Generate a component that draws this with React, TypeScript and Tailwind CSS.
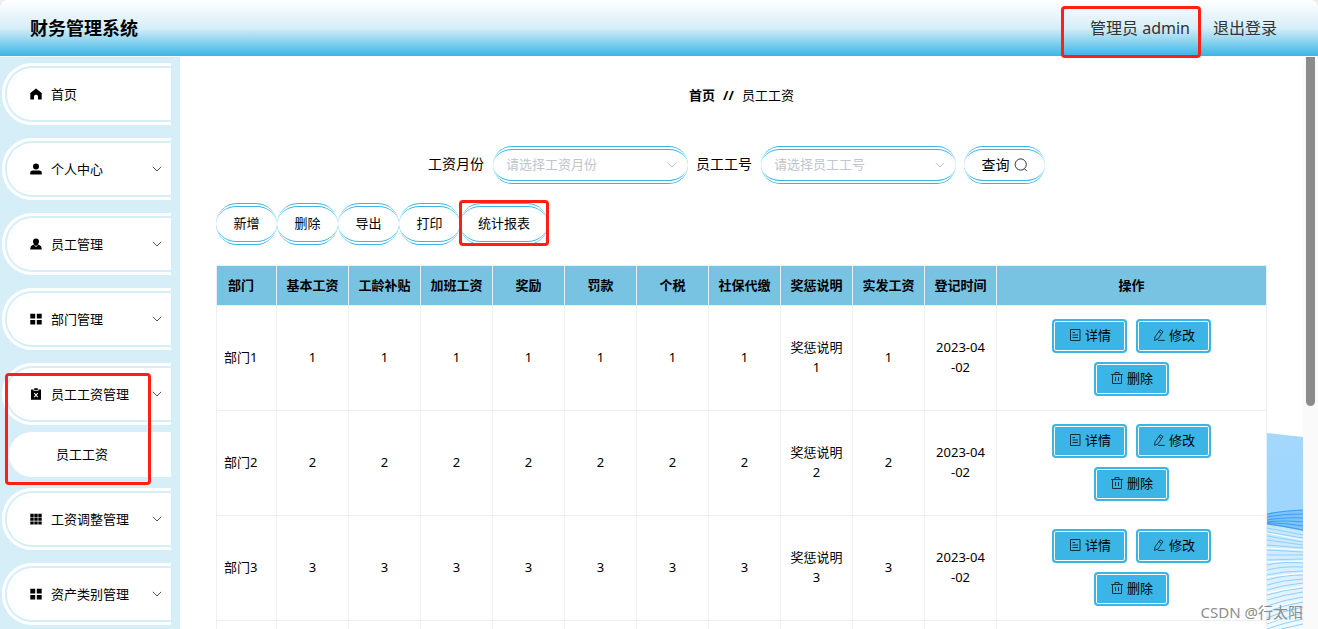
import type { ReactNode } from 'react';

type MenuItem = {
  label: string;
  icon: ReactNode;
  children?: string[];
  leaf?: boolean;
};

function Icon({ children }: { children: ReactNode }) {
  return (
    <svg viewBox="0 0 12 12" className="size-3 shrink-0" fill="currentColor" aria-hidden="true">
      {children}
    </svg>
  );
}

const homeIcon = (
  <Icon>
    <path d="M6 .5 11.700 5v6.600H8V8.400C8 6.200 4 6.200 4 8.400v3.200H.3V5z" />
  </Icon>
);

const userIcon = (
  <Icon>
    <circle cx="6" cy="3.4" r="3" />
    <path d="M.2 11.600V10c0-1.600 1-2.500 2.600-2.500h6.400c1.600 0 2.600.9 2.600 2.500v1.600z" />
  </Icon>
);

const staffIcon = (
  <Icon>
    <path d="M6 .4a3 3 0 0 1 3 3c0 1.300-.6 2.300-1.300 2.900l2.400 1.100c.9.4 1.500 1.700 1.700 4.200H.2c.2-2.500.8-3.800 1.700-4.200l2.400-1.100C3.600 5.700 3 4.700 3 3.400a3 3 0 0 1 3-3z" />
    <path d="M4.600 7.200 6 8.800l1.400-1.600" stroke="#fff" strokeWidth=".8" fill="none" />
  </Icon>
);

const menuIcon = (
  <Icon>
    <path d="M.3.800H5.200v4.600H.3zM6.800.800h4.900v4.600H6.800zM.3 6.900h4.900v4.600H.3zM6.800 6.900h4.900v4.600H6.800z" />
  </Icon>
);

const releaseIcon = (
  <Icon>
    <path d="M1 1.500h2.500v1.200h5V1.500H11v10.300H1zM4.200.3h3.600v1.700H4.200z" />
    <path d="m4.200 5 3.600 4.200M7.800 5 4.200 9.200" stroke="#fff" strokeWidth="1.100" />
  </Icon>
);

const gridIcon = (
  <Icon>
    <path d="M.3.800h3.400v3.200H.3zM4.300.800h3.400v3.200H4.300zM8.300.800h3.400v3.200H8.300zM.3 4.600h3.400v3.200H.3zM4.300 4.600h3.400v3.200H4.300zM8.300 4.600h3.400v3.200H8.300zM.3 8.400h3.400v3.200H.3zM4.300 8.400h3.400v3.200H4.300zM8.300 8.400h3.400v3.200H8.300z" />
  </Icon>
);

const menu: MenuItem[] = [
  { label: '首页', icon: homeIcon, leaf: true },
  { label: '个人中心', icon: userIcon },
  { label: '员工管理', icon: staffIcon },
  { label: '部门管理', icon: menuIcon },
  { label: '员工工资管理', icon: releaseIcon, children: ['员工工资'] },
  { label: '工资调整管理', icon: gridIcon },
  { label: '资产类别管理', icon: menuIcon },
];

const columns = [
  '基本工资',
  '工龄补贴',
  '加班工资',
  '奖励',
  '罚款',
  '个税',
  '社保代缴',
  '奖惩说明',
  '实发工资',
  '登记时间',
];

const rows = [1, 2, 3].map((n) => ({
  dept: `部门${n}`,
  values: [n, n, n, n, n, n, n, `奖惩说明${n}`, n, '2023-04\n-02'],
}));

function Chevron({ className }: { className: string }) {
  return (
    <svg viewBox="0 0 10 6" className={className} fill="none" stroke="currentColor" aria-hidden="true">
      <path d="m.8.8 4.200 4.200L9.200.8" />
    </svg>
  );
}

function Highlight({ className }: { className: string }) {
  return (
    <span className={`pointer-events-none absolute z-10 rounded-sm border-3 border-[#fe2015] ${className}`} />
  );
}

function SideMenu() {
  return (
    <nav className="w-[180px] shrink-0 overflow-hidden bg-[#d6eef8] pt-[6px] pr-[9px] pl-[2px]">
      <ul className="flex flex-col gap-[13px]">
        {menu.map((item) => (
          <li key={item.label} className={item.children ? 'relative -mb-[2px]' : ''}>
            <button className="flex h-[62px] w-full items-center gap-[9px] rounded-l-[30px] border-8 border-r-0 border-double border-white bg-white bg-clip-padding pr-[9px] pb-px pl-5">
              {item.icon}
              <span className="flex-1 text-left">{item.label}</span>
              {!item.leaf && <Chevron className="w-[10px] text-[#555]" />}
            </button>
            {item.children?.map((child) => (
              <a
                key={child}
                href="#"
                className="mt-[7px] ml-[7px] flex h-[45px] items-center rounded-l-full bg-white pb-[2px] pl-[47px]"
              >
                {child}
              </a>
            ))}
            {item.children && <Highlight className="top-[10px] right-5 -bottom-2 left-[3px]" />}
          </li>
        ))}
      </ul>
    </nav>
  );
}

function FilterSelect({ id, label, placeholder }: { id: string; label: string; placeholder: string }) {
  return (
    <div className="mr-2 flex items-center gap-[9px]">
      <label htmlFor={id} className="pb-[2px] text-sm">
        {label}
      </label>
      <div className="relative">
        <select
          id={id}
          className="h-[38px] w-[195px] appearance-none rounded-[30px] border-y-4 border-double border-[#3ab5e6] bg-white pb-[3px] pl-[13px] text-[#c0c4cc]"
        >
          <option>{placeholder}</option>
        </select>
        <Chevron className="pointer-events-none absolute top-4 right-[11px] w-[10px] text-[#c0c4cc]" />
      </div>
    </div>
  );
}

function ToolButton({ label, marked }: { label: string; marked?: boolean }) {
  return (
    <button
      className={`relative h-[42px] rounded-[30px] border-y-4 border-double border-[#3ab5e6] bg-white pb-[3px] ${marked ? 'w-[88px]' : 'w-[61px]'}`}
    >
      {label}
      {marked && <Highlight className="-inset-x-px -top-[7px] -bottom-[5px]" />}
    </button>
  );
}

function ActionButton({ label, children }: { label: string; children: ReactNode }) {
  return (
    <button className="flex h-[34px] w-[75px] items-center justify-center gap-1 rounded border-2 border-[#3ab5e6] bg-[#3ab5e6] pb-[2px] pl-px shadow-[inset_0_0_0_1px_#fff]">
      <svg viewBox="0 0 12 12" className="size-3" fill="none" stroke="#123441" aria-hidden="true">
        {children}
      </svg>
      {label}
    </button>
  );
}

function SalaryTable() {
  return (
    <table className="mt-5 w-full table-fixed border-separate border-spacing-0 border-t border-l border-[#ebeef5] bg-white">
      <colgroup>
        <col className="w-[60px]" />
        {columns.map((c) => (
          <col key={c} className="w-[72px]" />
        ))}
        <col />
      </colgroup>
      <thead>
        <tr className="h-10 bg-[#78c3e2]">
          <th className="border-r border-b border-[#ebeef5] pb-[2px] pl-[11px] text-left">部门</th>
          {columns.map((c) => (
            <th key={c} className="border-r border-b border-[#ebeef5] pb-[2px]">
              {c}
            </th>
          ))}
          <th className="border-r border-b border-[#ebeef5] pb-[2px]">操作</th>
        </tr>
      </thead>
      <tbody>
        {rows.map((row) => (
          <tr key={row.dept} className="h-[105px]">
            <td className="border-r border-b border-[#ebeef5] pb-[2px] pl-[7px]">{row.dept}</td>
            {row.values.map((value, i) => (
              <td
                key={columns[i]}
                className="border-r border-b border-[#ebeef5] px-2 pb-[2px] text-center break-all whitespace-pre-line"
              >
                {value}
              </td>
            ))}
            <td className="border-r border-b border-[#ebeef5] px-5 pb-[2px]">
              <div className="flex flex-wrap justify-center gap-[9px]">
                <ActionButton label="详情">
                  <path d="M1.500.500h9.500v11h-9.500zM3.500 3.500h2.500M3.500 6h5.500M3.500 8.500h5.500" />
                </ActionButton>
                <ActionButton label="修改">
                  <path d="M7.200.800 10 2.600 5 9.900 1.600 11.400l.4-3.500zM6 2.700l2.700 1.800M5 11.400h6.800" />
                </ActionButton>
                <ActionButton label="删除">
                  <path d="M.2 2.500h11.600M1.500 2.500v9h9v-9M4 2.500V.500h4v2M4.500 5v4M7.500 5v4" />
                </ActionButton>
              </div>
            </td>
          </tr>
        ))}
        <tr className="h-[105px]" aria-hidden="true">
          {Array.from({ length: columns.length + 2 }, (_, i) => (
            <td key={i} className="border-r border-b border-[#ebeef5]" />
          ))}
        </tr>
      </tbody>
    </table>
  );
}

// decorative waves behind the content, only the right edge is visible
function Waves() {
  return (
    <svg
      viewBox="0 0 36 196"
      preserveAspectRatio="none"
      className="absolute right-0 bottom-0 h-[196px] w-9"
      fill="none"
      aria-hidden="true"
    >
      <defs>
        <linearGradient id="sky" x1="0" y1="0" x2="0" y2="1">
          <stop offset="0" stopColor="#a4d8fb" />
          <stop offset="1" stopColor="#9bd5ff" />
        </linearGradient>
        <linearGradient id="sea" x1="0" y1="0" x2="0" y2="1">
          <stop offset="0" stopColor="#c3e6fd" />
          <stop offset="1" stopColor="#f2faff" />
        </linearGradient>
      </defs>
      <path d="M0 0 36 4V98L0 91z" fill="url(#sky)" />
      <path d="M0 90 36 98v98H0z" fill="url(#sea)" />
      <path d="M0 81Q16 77 36 77V98Q18 94 0 91z" fill="#7cc3fb" />
      <g stroke="#3e9df7" strokeWidth="1.200">
        <path d="M0 81Q16 78 36 77M0 84Q16 81 36 81M0 87Q16 84 36 85M0 89Q16 87 36 89M0 90Q18 90 36 93M0 91Q18 93 36 97" />
      </g>
      <g stroke="#8fd0fb" strokeWidth="1">
        <path d="M0 95 36 102M0 99 36 105M0 103 36 109M0 107 36 112M0 112 36 115M0 117 36 119M0 122 36 122M0 127 36 126M0 132Q16 128 36 130M0 137Q16 133 36 134M0 142Q16 138 36 138M0 147Q16 142 36 142M0 152Q16 147 36 146M0 157Q16 152 36 150M0 162Q16 157 36 155M0 167Q16 162 36 159M0 173Q16 167 36 164M0 179Q16 172 36 169M0 185Q16 178 36 174M0 191Q16 184 36 180M0 196Q16 190 36 186M14 196 36 191" />
      </g>
      <path d="M0 100 36 107M0 115 36 117M0 129 36 128M0 144 36 140M0 160 36 153M0 176 36 167M0 190 36 178" stroke="#fff" />
    </svg>
  );
}

export default function App() {
  return (
    <div className="flex h-screen flex-col overflow-hidden bg-white font-['Noto_Sans','Noto_Sans_CJK_SC',sans-serif] text-[13px] leading-5 text-black">
      <div className="bg-[#eee]">
        <header className="flex h-14 shrink-0 items-center justify-between rounded-t-lg bg-[linear-gradient(180deg,#fff,#d6eef8_50%,#3ab5e6)] pr-[41px] pl-[30px]">
          <h1 className="text-lg font-bold">财务管理系统</h1>
          <div className="flex items-center gap-[23px] text-base text-[#333]">
            <span className="relative">
              管理员 admin
              <Highlight className="-top-[10px] -right-[11px] -bottom-[18px] -left-[29px]" />
            </span>
            <a href="#">退出登录</a>
          </div>
        </header>
      </div>

      <div className="mt-px flex min-h-0 flex-1">
        <SideMenu />
        <main className="relative min-w-0 flex-1 overflow-hidden px-9 pt-7">
          <Waves />
          <div className="relative">
            <div className="flex justify-center gap-2">
              <b>首页</b>
              <b>//</b>
              <span>员工工资</span>
            </div>

            <form className="mt-[41px] flex justify-center">
              <FilterSelect id="month" label="工资月份" placeholder="请选择工资月份" />
              <FilterSelect id="staff" label="员工工号" placeholder="请选择员工工号" />
              <button
                type="button"
                className="mr-[10px] flex h-[38px] w-[81px] items-center justify-center gap-1 rounded-[30px] border-y-4 border-double border-[#3ab5e6] bg-white text-sm"
              >
                查询
                <svg viewBox="0 0 14 14" className="size-[14px]" fill="none" stroke="#333" aria-hidden="true">
                  <circle cx="6.700" cy="6.500" r="5.600" />
                  <path d="m10.500 10.800 2.300 2.300" />
                </svg>
              </button>
            </form>

            <div className="mt-[19px] flex">
              <ToolButton label="新增" />
              <ToolButton label="删除" />
              <ToolButton label="导出" />
              <ToolButton label="打印" />
              <ToolButton label="统计报表" marked />
            </div>

            <SalaryTable />
          </div>
          <span className="absolute right-0 bottom-[7px] text-[15px] text-[#8c8c8c]">CSDN @行太阳</span>
        </main>
        <div className="flex w-[15px] shrink-0 justify-center bg-[#fafafa]">
          <div className="h-[61%] w-[9px] rounded-b-full bg-[#8b8b8b]" />
        </div>
      </div>
    </div>
  );
}
